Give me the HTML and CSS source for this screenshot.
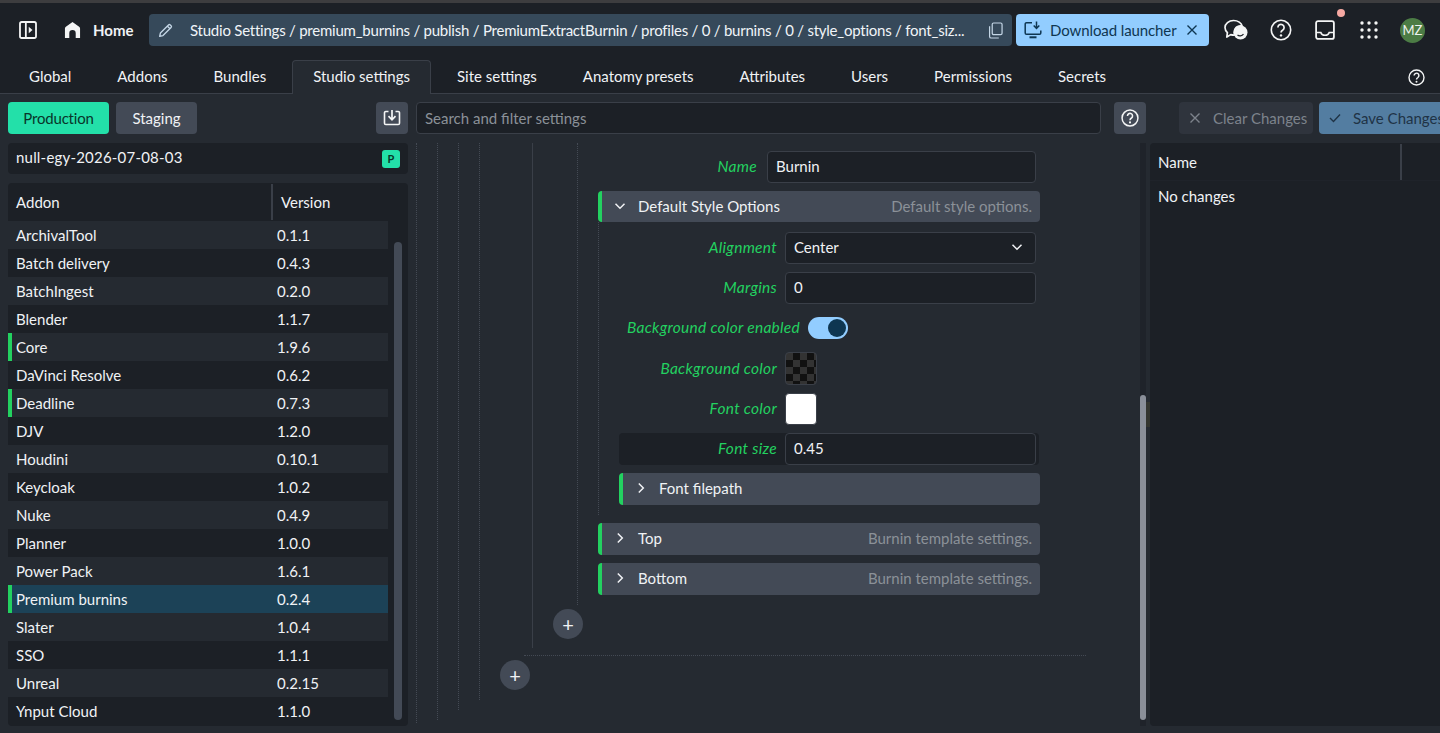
FILE: index.html
```html
<!DOCTYPE html>
<html lang="en">
<head>
    <meta charset="UTF-8">
    <meta name="viewport" content="width=device-width, initial-scale=1.0">
    <title>Studio settings</title>
    <link rel="stylesheet" href="styles.css">
</head>
<body>
    <header class="header">
        <svg class="icon sidebar-icon" viewBox="0 0 20 20"><rect x="1.100" y="1.100" width="17.800" height="17.800" rx="2" fill="none" stroke="currentColor" stroke-width="2"/><path d="M7.600 2v16" stroke="currentColor" stroke-width="2"/><path d="M10.800 6.300 15 10l-4.200 3.700z" fill="currentColor"/></svg>
        <svg class="icon home-icon" viewBox="0 0 18 18"><path d="M9 .5 16 5.500a2.500 2.500 0 0 1 1 2v10H12.400V12.500a3.400 3.400 0 0 0-6.800 0v5H1v-10a2.500 2.500 0 0 1 1-2z" fill="currentColor"/></svg>
        <span class="home-label">Home</span>
        <div class="breadcrumb">
            <svg class="icon edit-icon" viewBox="0 0 18 18"><path d="M2 16l.9-4L12.600 2.300a1.500 1.500 0 0 1 2.100 0l1 1a1.500 1.500 0 0 1 0 2.100L6 15.100zM11.200 3.700l3.100 3.100" fill="none" stroke="currentColor" stroke-width="1.600" stroke-linejoin="round"/></svg>
            <span class="breadcrumb-text">Studio Settings / premium_burnins / publish / PremiumExtractBurnin / profiles / 0 / burnins / 0 / style_options / font_siz...</span>
            <svg class="icon copy-icon" viewBox="0 0 16 18"><rect x="4.500" y="1" width="10.500" height="12.500" rx="1.500" fill="none" stroke="currentColor" stroke-width="1.300"/><path d="M1.700 4.500v10.800A1.700 1.700 0 0 0 3.400 17h8.100" fill="none" stroke="currentColor" stroke-width="1.300"/></svg>
        </div>
        <div class="download">
            <svg class="icon launcher-icon" viewBox="0 0 18 18"><path d="M8 1.700H2.500A1.300 1.300 0 0 0 1.200 3v9a1.300 1.300 0 0 0 1.300 1.300h13A1.300 1.300 0 0 0 16.800 12V9.500" fill="none" stroke="currentColor" stroke-width="1.500"/><path d="M5.500 16.300h7" stroke="currentColor" stroke-width="2"/><path d="M12.500 .5v6M9.700 4.500l2.800 2.900 2.800-2.900" fill="none" stroke="currentColor" stroke-width="1.500"/></svg>
            <span class="download-label">Download launcher</span>
            <svg class="icon small-x" viewBox="0 0 12 12"><path d="M1.500 1.500l9 9m0-9l-9 9" stroke="currentColor" stroke-width="1.400"/></svg>
        </div>
        <svg class="icon chat-icon" viewBox="0 0 24 22"><path d="M9.500 1.500c4.500 0 8 2.500 8.600 5.500-4.500-1-8 2-7.800 6.500 0 1 .3 1.800.7 2.500-1.600.3-3 0-4.300-.4L2.800 18l.6-4.400C1.900 12.200 1 10.400 1 8.500c0-3.900 3.800-7 8.500-7z" fill="none" stroke="currentColor" stroke-width="1.700" stroke-linejoin="round"/><circle cx="16.500" cy="13.500" r="7" fill="currentColor"/><path d="M13.500 16c1.500 1.300 4.500 1.300 6-1" fill="none" stroke="#1c2026" stroke-width="1.200"/></svg>
        <svg class="icon help-icon" viewBox="0 0 22 22"><circle cx="11" cy="11" r="9.700" fill="none" stroke="currentColor" stroke-width="1.600"/><path d="M7.900 8.500a3.100 3.100 0 1 1 4.900 2.500c-1.200.8-1.800 1.300-1.800 2.600" fill="none" stroke="currentColor" stroke-width="1.700"/><circle cx="11" cy="16.400" r="1.200" fill="currentColor"/></svg>
        <div class="inbox-wrap">
            <svg class="icon inbox-icon" viewBox="0 0 20 20"><rect x="1.100" y="1.100" width="17.800" height="17.800" rx="2" fill="none" stroke="currentColor" stroke-width="1.800"/><path d="M1.500 12.500h4.300c.6 2 2.200 2.800 4.200 2.800s3.600-.8 4.200-2.800h4.300" fill="none" stroke="currentColor" stroke-width="1.600"/></svg>
            <span class="notification-dot"></span>
        </div>
        <svg class="icon apps-icon" viewBox="0 0 18 18"><g fill="currentColor"><circle cx="2" cy="2" r="1.700"/><circle cx="9" cy="2" r="1.700"/><circle cx="16" cy="2" r="1.700"/><circle cx="2" cy="9" r="1.700"/><circle cx="9" cy="9" r="1.700"/><circle cx="16" cy="9" r="1.700"/><circle cx="2" cy="16" r="1.700"/><circle cx="9" cy="16" r="1.700"/><circle cx="16" cy="16" r="1.700"/></g></svg>
        <div class="avatar">MZ</div>
    </header>

    <nav class="tabs">
        <a class="tab">Global</a>
        <a class="tab">Addons</a>
        <a class="tab">Bundles</a>
        <a class="tab active">Studio settings</a>
        <a class="tab">Site settings</a>
        <a class="tab">Anatomy presets</a>
        <a class="tab">Attributes</a>
        <a class="tab">Users</a>
        <a class="tab">Permissions</a>
        <a class="tab">Secrets</a>
        <svg class="icon tabs-help" viewBox="0 0 22 22"><circle cx="11" cy="11" r="9.700" fill="none" stroke="currentColor" stroke-width="1.800"/><path d="M7.900 8.500a3.100 3.100 0 1 1 4.900 2.500c-1.200.8-1.800 1.300-1.800 2.600" fill="none" stroke="currentColor" stroke-width="1.900"/><circle cx="11" cy="16.400" r="1.300" fill="currentColor"/></svg>
    </nav>

    <main class="main">
        <div class="toolbar">
            <div class="toolbar-left">
                <button class="btn btn-green">Production</button>
                <button class="btn btn-gray">Staging</button>
                <button class="btn-icon push-right">
                    <svg class="icon" viewBox="0 0 18 18"><path d="M5.500 2.500H2.800A1.300 1.300 0 0 0 1.500 3.800v10.400a1.300 1.300 0 0 0 1.300 1.300h12.400a1.300 1.300 0 0 0 1.300-1.300V3.800a1.300 1.300 0 0 0-1.300-1.300h-2.700" fill="none" stroke="currentColor" stroke-width="1.600"/><path d="M9 1v9M5.500 7.200 9 10.800l3.500-3.600" fill="none" stroke="currentColor" stroke-width="1.700"/></svg>
                </button>
            </div>
            <div class="search">Search and filter settings</div>
            <button class="btn-icon">
                <svg class="icon" viewBox="0 0 22 22"><circle cx="11" cy="11" r="9.700" fill="none" stroke="currentColor" stroke-width="1.800"/><path d="M7.900 8.500a3.100 3.100 0 1 1 4.900 2.500c-1.200.8-1.800 1.300-1.800 2.600" fill="none" stroke="currentColor" stroke-width="1.900"/><circle cx="11" cy="16.400" r="1.300" fill="currentColor"/></svg>
            </button>
            <button class="btn btn-clear">
                <svg class="icon small-x" viewBox="0 0 12 12"><path d="M1.500 1.500l9 9m0-9l-9 9" stroke="currentColor" stroke-width="1.400"/></svg>
                Clear Changes
            </button>
            <button class="btn btn-save">
                <svg class="icon check-icon" viewBox="0 0 12 10"><path d="M1 5l3.500 3.500L11 1.500" fill="none" stroke="currentColor" stroke-width="1.400"/></svg>
                Save Changes
            </button>
        </div>

        <div class="panels">
            <section class="left-panel">
                <div class="bundle-row">
                    <span class="bundle-name">null-egy-2026-07-08-03</span>
                    <span class="badge">P</span>
                </div>
                <div class="addons">
                    <div class="addons-head">
                        <span class="col-name">Addon</span>
                        <span class="col-version">Version</span>
                    </div>
                    <div class="addon-row"><span class="col-name">ArchivalTool</span><span>0.1.1</span></div>
                    <div class="addon-row"><span class="col-name">Batch delivery</span><span>0.4.3</span></div>
                    <div class="addon-row"><span class="col-name">BatchIngest</span><span>0.2.0</span></div>
                    <div class="addon-row"><span class="col-name">Blender</span><span>1.1.7</span></div>
                    <div class="addon-row changed"><span class="col-name">Core</span><span>1.9.6</span></div>
                    <div class="addon-row"><span class="col-name">DaVinci Resolve</span><span>0.6.2</span></div>
                    <div class="addon-row changed"><span class="col-name">Deadline</span><span>0.7.3</span></div>
                    <div class="addon-row"><span class="col-name">DJV</span><span>1.2.0</span></div>
                    <div class="addon-row"><span class="col-name">Houdini</span><span>0.10.1</span></div>
                    <div class="addon-row"><span class="col-name">Keycloak</span><span>1.0.2</span></div>
                    <div class="addon-row"><span class="col-name">Nuke</span><span>0.4.9</span></div>
                    <div class="addon-row"><span class="col-name">Planner</span><span>1.0.0</span></div>
                    <div class="addon-row"><span class="col-name">Power Pack</span><span>1.6.1</span></div>
                    <div class="addon-row changed selected"><span class="col-name">Premium burnins</span><span>0.2.4</span></div>
                    <div class="addon-row"><span class="col-name">Slater</span><span>1.0.4</span></div>
                    <div class="addon-row"><span class="col-name">SSO</span><span>1.1.1</span></div>
                    <div class="addon-row"><span class="col-name">Unreal</span><span>0.2.15</span></div>
                    <div class="addon-row"><span class="col-name">Ynput Cloud</span><span>1.1.0</span></div>
                    <div class="addons-scroll"></div>
                </div>
            </section>

            <section class="form-panel">
                <div class="guide guide-1">
                    <div class="guide guide-2">
                        <div class="guide guide-3">
                            <div class="guide guide-4">
                                <div class="guide guide-5">
                                    <div class="guide guide-6">
                                        <div class="form-row name-row">
                                            <label class="field-label">Name</label>
                                            <div class="field">Burnin</div>
                                        </div>
                                        <div class="group-head first-head">
                                            <svg class="chevron" viewBox="0 0 12 12"><path d="M1.500 3.800 6 8.300l4.500-4.500" fill="none" stroke="currentColor" stroke-width="1.500"/></svg>
                                            <span class="group-title">Default Style Options</span>
                                            <span class="group-hint">Default style options.</span>
                                        </div>
                                        <div class="group-body">
                                            <div class="form-row">
                                                <label class="field-label">Alignment</label>
                                                <div class="field select">
                                                    Center
                                                    <svg class="chevron" viewBox="0 0 12 12"><path d="M1.500 3.800 6 8.300l4.500-4.500" fill="none" stroke="currentColor" stroke-width="1.500"/></svg>
                                                </div>
                                            </div>
                                            <div class="form-row">
                                                <label class="field-label">Margins</label>
                                                <div class="field">0</div>
                                            </div>
                                            <div class="form-row">
                                                <label class="field-label">Background color enabled</label>
                                                <span class="toggle"><span class="toggle-knob"></span></span>
                                            </div>
                                            <div class="form-row">
                                                <label class="field-label">Background color</label>
                                                <span class="swatch swatch-checker"></span>
                                            </div>
                                            <div class="form-row">
                                                <label class="field-label">Font color</label>
                                                <span class="swatch swatch-white"></span>
                                            </div>
                                            <div class="form-row form-row-active">
                                                <label class="field-label">Font size</label>
                                                <div class="field">0.45</div>
                                            </div>
                                            <div class="group-head nested-head">
                                                <svg class="chevron" viewBox="0 0 12 12"><path d="M3.800 1.500 8.300 6l-4.500 4.500" fill="none" stroke="currentColor" stroke-width="1.500"/></svg>
                                                <span class="group-title">Font filepath</span>
                                            </div>
                                        </div>
                                        <div class="group-head">
                                            <svg class="chevron" viewBox="0 0 12 12"><path d="M3.800 1.500 8.300 6l-4.500 4.500" fill="none" stroke="currentColor" stroke-width="1.500"/></svg>
                                            <span class="group-title">Top</span>
                                            <span class="group-hint">Burnin template settings.</span>
                                        </div>
                                        <div class="group-head">
                                            <svg class="chevron" viewBox="0 0 12 12"><path d="M3.800 1.500 8.300 6l-4.500 4.500" fill="none" stroke="currentColor" stroke-width="1.500"/></svg>
                                            <span class="group-title">Bottom</span>
                                            <span class="group-hint">Burnin template settings.</span>
                                        </div>
                                    </div>
                                    <button class="add-btn add-inner">+</button>
                                </div>
                                <div class="item-rule"></div>
                                <button class="add-btn add-outer">+</button>
                            </div>
                        </div>
                    </div>
                </div>
                <div class="scroll-track"><div class="scroll-thumb"></div></div>
            </section>

            <section class="changes-panel">
                <span class="splitter"></span>
                <div class="changes-head"><span>Name</span><span class="changes-divider"></span></div>
                <div class="changes-empty">No changes</div>
            </section>
        </div>
    </main>
</body>
</html>
```
FILE: styles.css
```css
* {
    box-sizing: border-box;
}

html, body {
    height: 100%;
}

body {
    margin: 0;
    height: 733px;
    overflow: hidden;
    display: flex;
    flex-direction: column;
    background-color: #252a31;
    color: #f0f2f5;
    font-family: "Lato", "Noto Sans", sans-serif;
    font-size: 15px;
    border-top: 3px solid #3d3d3f;
}

.icon {
    display: block;
    flex-shrink: 0;
}

/* top bar */
.header {
    display: flex;
    align-items: center;
    height: 54px;
    padding-left: 19px;
    background-color: #1c2026;
}

.sidebar-icon {
    width: 18px;
    height: 18px;
    color: #f4f5f5;
}

.home-icon {
    width: 17px;
    height: 18px;
    margin-left: 27px;
    color: #f4f5f5;
}

.home-label {
    margin-left: 12px;
    font-weight: 700;
    width: 45px;
}

.breadcrumb {
    display: flex;
    align-items: center;
    width: 863px;
    height: 32px;
    margin-left: 11px;
    padding: 0 9px 0 9px;
    background-color: #36495a;
    border-radius: 4px;
    color: #f0f4f8;
}

.edit-icon {
    width: 15px;
    height: 15px;
    color: #c4d6e6;
}

.breadcrumb-text {
    margin-left: 17px;
    flex: 1;
    white-space: nowrap;
    letter-spacing: -0.23px;
}

.copy-icon {
    width: 15px;
    height: 17px;
    color: #c4d6e6;
}

.download {
    display: flex;
    align-items: center;
    width: 193px;
    height: 32px;
    margin-left: 4px;
    padding: 0 11px 0 8px;
    background-color: #92cdff;
    border-radius: 4px;
    color: #0e3651;
}

.launcher-icon {
    width: 18px;
    height: 18px;
}

.download-label {
    margin-left: 8px;
    flex: 1;
    white-space: nowrap;
    letter-spacing: -0.1px;
}

.small-x {
    width: 12px;
    height: 12px;
}

.chat-icon {
    width: 24px;
    height: 22px;
    margin-left: 15px;
    color: #f4f5f5;
}

.help-icon {
    width: 22px;
    height: 22px;
    margin-left: 22px;
    color: #f4f5f5;
}

.inbox-wrap {
    position: relative;
    margin-left: 23px;
}

.inbox-icon {
    width: 20px;
    height: 20px;
    color: #f4f5f5;
}

.notification-dot {
    position: absolute;
    top: -11px;
    left: 22px;
    width: 8px;
    height: 8px;
    border-radius: 50%;
    background-color: #f6a8a2;
}

.apps-icon {
    width: 18px;
    height: 18px;
    margin-left: 25px;
    color: #f4f5f5;
}

.avatar {
    display: flex;
    align-items: center;
    justify-content: center;
    width: 25px;
    height: 25px;
    margin-left: 22px;
    border-radius: 50%;
    background-color: #4c7c45;
    color: #eef2ee;
    font-size: 13px;
}

/* tabs */
.tabs {
    display: flex;
    align-items: flex-end;
    height: 37px;
    padding-left: 6px;
    background-color: #1c2026;
    border-bottom: 1px solid #3a3f48;
}

.tab {
    display: flex;
    align-items: center;
    height: 33px;
    padding: 0 23px 2px;
    white-space: nowrap;
}

.tab.active {
    height: 34px;
    margin: 0 3px -1px;
    padding: 0 20px 3px;
    background-color: #252a31;
    border: 1px solid #3a3f48;
    border-bottom: none;
    border-radius: 4px 4px 0 0;
}

.tabs-help {
    width: 17px;
    height: 17px;
    margin-left: auto;
    margin-right: 15px;
    margin-bottom: 7px;
    color: #f4f5f5;
}

/* main area */
.main {
    flex: 1;
    min-height: 0;
    display: flex;
    flex-direction: column;
    padding: 8px 0 7px 8px;
}

.toolbar {
    display: flex;
    align-items: center;
    height: 32px;
    flex-shrink: 0;
}

.toolbar-left {
    display: flex;
    align-items: center;
    gap: 7px;
    width: 400px;
    flex-shrink: 0;
}

.push-right {
    margin-left: auto;
}

.btn {
    display: flex;
    align-items: center;
    height: 32px;
    border: none;
    border-radius: 4px;
    font: inherit;
    white-space: nowrap;
    padding: 0 16px;
}

.btn-green {
    background-color: #23e0a9;
    color: #09352a;
    width: 101px;
    justify-content: center;
    letter-spacing: -0.2px;
}

.btn-gray {
    background-color: #434a56;
    color: #f0f2f5;
    width: 81px;
    justify-content: center;
}

.btn-icon {
    display: flex;
    align-items: center;
    justify-content: center;
    width: 32px;
    height: 32px;
    flex-shrink: 0;
    padding: 0;
    border: none;
    border-radius: 4px;
    background-color: #434a56;
    color: #f4f5f5;
}

.btn-icon .icon {
    width: 18px;
    height: 18px;
}

.search {
    display: flex;
    align-items: center;
    width: 685px;
    height: 32px;
    flex-shrink: 0;
    margin: 0 13px 0 8px;
    padding-left: 8px;
    background-color: #1c2026;
    border: 1px solid #3a3f48;
    border-radius: 4px;
    color: #8b9198;
}

.btn-clear {
    flex-shrink: 0;
    width: 134px;
    margin-left: 33px;
    padding: 0 0 0 10px;
    gap: 12px;
    background-color: #2f343d;
    color: #7d838c;
}

.btn-save {
    flex-shrink: 0;
    width: 140px;
    margin-left: 6px;
    padding: 0 0 0 10px;
    gap: 12px;
    background-color: #537da1;
    color: #1f3346;
}

.check-icon {
    width: 12px;
    height: 10px;
}

.panels {
    flex: 1;
    min-height: 0;
    display: flex;
    margin-top: 9px;
}

/* left column */
.left-panel {
    display: flex;
    flex-direction: column;
    gap: 9px;
    width: 400px;
    flex-shrink: 0;
}

.bundle-row {
    display: flex;
    align-items: center;
    justify-content: space-between;
    height: 31px;
    padding: 0 8px;
    background-color: #1c2026;
    border-radius: 4px;
}

.bundle-name {
    padding-bottom: 3px;
    letter-spacing: 0.2px;
}

.badge {
    display: flex;
    align-items: center;
    justify-content: center;
    width: 18px;
    height: 18px;
    border-radius: 3px;
    background-color: #23e0a9;
    color: #09352a;
    font-size: 11px;
    font-weight: 700;
}

.addons {
    position: relative;
    flex: 1;
    background-color: #1c2026;
    border-radius: 4px;
}

.addons-head {
    display: flex;
    align-items: center;
    height: 38px;
    padding-left: 8px;
}

.addons-head .col-name {
    width: 255px;
}

.col-name {
    width: 261px;
    flex-shrink: 0;
}

.col-version {
    height: 36px;
    display: flex;
    align-items: center;
    border-left: 2px solid #3a3f48;
    padding-left: 8px;
}

.addon-row {
    display: flex;
    align-items: center;
    width: 380px;
    height: 28px;
    padding-left: 8px;
}

.addon-row:nth-child(even) {
    background-color: #252a31;
}

.addon-row.changed {
    border-left: 4px solid #23d160;
    padding-left: 4px;
}

.addon-row.selected {
    background-color: #1c4257;
}

.addons-scroll {
    position: absolute;
    top: 59px;
    left: 386px;
    width: 8px;
    height: 478px;
    border-radius: 4px;
    background-color: #434a56;
}

/* middle column */
.form-panel {
    position: relative;
    width: 730px;
    flex-shrink: 0;
    margin-left: 8px;
    overflow: hidden;
}

.guide {
    border-left: 1px dotted #444a54;
    padding-left: 20px;
}

.guide-1 {
    height: 580px;
}

.guide-2 {
    height: 577px;
}

.guide-3 {
    height: 567px;
}

.guide-4 {
    height: 557px;
}

.guide-5 {
    margin-left: 32px;
    height: 505px;
    border-left: 1px solid #3a3f48;
}

.guide-6 {
    margin-left: 24px;
    height: 462px;
    padding-top: 8px;
}

.form-row {
    display: flex;
    align-items: center;
    gap: 8px;
    min-height: 32px;
    margin-top: 8px;
    padding-right: 4px;
}

.name-row {
    width: 441px;
    margin-top: 0;
    gap: 10px;
    padding-right: 3px;
}

.name-row .field-label {
    width: 159px;
    min-width: 159px;
}

.field-label {
    min-width: 158px;
    padding: 0 0 2px 8px;
    text-align: right;
    color: #23d160;
    font-size: 15.5px;
    font-style: italic;
    letter-spacing: 0.28px;
    white-space: nowrap;
}

.field {
    flex: 1;
    display: flex;
    align-items: center;
    height: 32px;
    padding: 0 8px 2px;
    background-color: #1c2026;
    border: 1px solid #3a3f48;
    border-radius: 4px;
}

.select {
    justify-content: space-between;
    padding-right: 12px;
}

.select .chevron {
    color: #f0f2f5;
}

.chevron {
    width: 12px;
    height: 12px;
    flex-shrink: 0;
}

.group-head {
    display: flex;
    align-items: center;
    width: 442px;
    height: 32px;
    margin-top: 8px;
    padding: 0 8px 2px 12px;
    background-color: #434a56;
    border-left: 4px solid #23d160;
    border-radius: 4px;
}

.first-head {
    height: 31px;
    padding-bottom: 1px;
}

.group-title {
    margin-left: 12px;
}

.group-hint {
    margin-left: auto;
    color: #8b9198;
}

.group-body {
    width: 442px;
    height: 293px;
    padding: 2px 0 0 20px;
    border-left: 1px dotted #444a54;
}

.nested-head {
    width: 421px;
}

.form-row-active {
    width: 420px;
    padding-right: 3px;
    background-color: #1c2026;
    border-radius: 4px;
}

.toggle {
    position: relative;
    display: block;
    width: 40px;
    height: 22px;
    border-radius: 11px;
    background-color: #92cdff;
}

.toggle-knob {
    position: absolute;
    top: 2px;
    right: 2px;
    width: 18px;
    height: 18px;
    border-radius: 50%;
    background-color: #0e3651;
}

.swatch {
    display: block;
    width: 32px;
    height: 32px;
    border-radius: 4px;
    border: 1px solid #3a3f48;
}

.swatch-checker {
    height: 33px;
    background-color: #333;
    background-image: conic-gradient(#111 25%, transparent 0 50%, #111 0 75%, transparent 0);
    background-size: 14px 14px;
}

.swatch-white {
    background-color: #fff;
}

.add-btn {
    display: block;
    width: 30px;
    height: 30px;
    padding: 0;
    border: none;
    border-radius: 50%;
    background-color: #434a56;
    color: #f0f2f5;
    font-family: inherit;
    font-size: 20px;
    line-height: 28px;
}

.add-inner {
    margin-top: 4px;
}

.item-rule {
    width: 562px;
    margin: 7px 0 4px 24px;
    border-top: 1px dotted #444a54;
}

.scroll-track {
    position: absolute;
    top: 0;
    right: 0;
    bottom: 0;
    width: 6px;
    background-color: #1f232a;
}

.scroll-thumb {
    position: absolute;
    top: 252px;
    left: 0;
    width: 6px;
    height: 325px;
    border-radius: 3px;
    background-color: #8a8f99;
}

/* right column */
.changes-panel {
    position: relative;
    flex: 1;
    margin-left: 4px;
    background-color: #1c2026;
    border-radius: 4px 0 0 4px;
}

.splitter {
    position: absolute;
    top: 259px;
    left: -4px;
    width: 4px;
    height: 25px;
    background-color: #33352f;
}

.changes-head {
    display: flex;
    align-items: center;
    justify-content: space-between;
    height: 38px;
    padding-left: 8px;
    padding-right: 38px;
    border-bottom: 1px solid #1f232a;
}

.changes-divider {
    width: 2px;
    height: 36px;
    background-color: #3a3f48;
}

.changes-empty {
    padding: 6px 8px;
}
```
